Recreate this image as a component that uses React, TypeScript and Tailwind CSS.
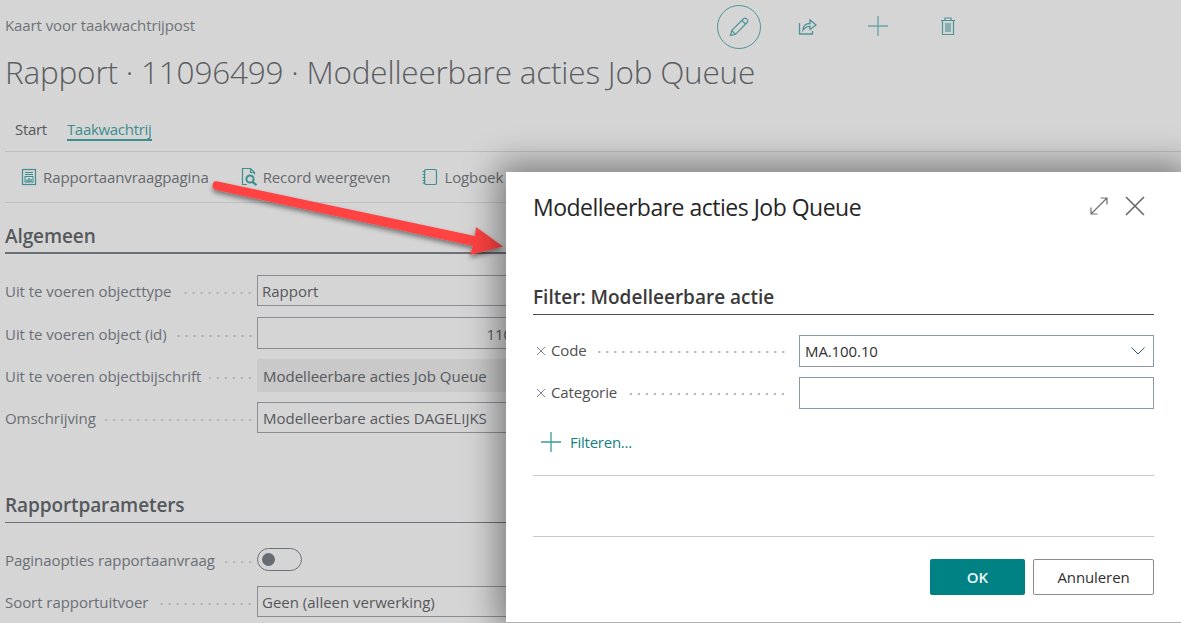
const font = { fontFamily: '"Open Sans", "Noto Sans", sans-serif' };

function Dots() {
  return (
    <span className="ml-[8px] mt-[3px] h-[2px] flex-1 bg-[radial-gradient(circle,#b2b2b2_1px,transparent_1.2px)] bg-[length:8px_2px] bg-right bg-repeat-x" />
  );
}

function PlusGlyph({ color, w = 1.4 }: { color: string; w?: number }) {
  return (
    <svg width="20" height="20" viewBox="0 0 20 20" fill="none" stroke={color} strokeWidth={w} className="shrink-0">
      <path d="M0 10h20M10 0v20" />
    </svg>
  );
}

function PageRow({ label, h, children }: { label: string; h: string; children: React.ReactNode }) {
  return (
    <div className={`flex items-center ${h}`}>
      <div className="flex w-[252px] shrink-0 items-center pr-[3px] pt-[2px] text-[15px] tracking-[-0.05px] text-[#6a6f75]">
        <span className="whitespace-nowrap">{label}</span>
        <Dots />
      </div>
      <div className="h-full w-[303px] shrink-0">{children}</div>
    </div>
  );
}

function Input({ children, right }: { children?: React.ReactNode; right?: boolean }) {
  return (
    <div
      className={`flex h-full items-center border border-[#8a8d92] px-[4px] pt-[2px] text-[15px] text-[#55585c] ${right ? 'justify-end' : ''}`}
    >
      {children}
    </div>
  );
}

function FilterRow({ label, children }: { label: string; children: React.ReactNode }) {
  return (
    <div className="flex h-[32px] items-center">
      <div className="flex w-[266px] shrink-0 items-center pb-[1px] pr-[12px] text-[15px] tracking-[-0.1px] text-[#505050]">
        <svg width="16" height="16" viewBox="0 0 16 16" fill="none" stroke="#7a6b8a" strokeWidth="0.9" className="mr-[2px] shrink-0">
          <path d="M4 4l8 8M12 4l-8 8" />
        </svg>
        <span className="whitespace-nowrap">{label}</span>
        <Dots />
      </div>
      <div className="flex h-full flex-1 items-center justify-between border border-[#8d97a8] px-[5px] text-[15px] tracking-[-0.1px] text-[#303030]">
        {children}
      </div>
    </div>
  );
}

function ActionIcon({ kind }: { kind: 'report' | 'search' | 'log' }) {
  return (
    <svg width="18" height="20" viewBox="0 0 18 20" fill="none" stroke="#3c8e90" strokeWidth="1.2" className="shrink-0">
      {kind === 'report' && (
        <>
          <rect x="2.5" y="2.5" width="13" height="15" />
          <path d="M5 5.5h8M5 7.5h8" />
          <rect x="5" y="9.5" width="8" height="5.5" strokeWidth="1" />
          <path d="M7 15v-2.5M9 15v-4M11 15v-3" strokeWidth="1.3" />
        </>
      )}
      {kind === 'search' && (
        <>
          <path d="M6 17.5H1.5V1.5h8l4 4v2M9.5 1.5v4h4" />
          <circle cx="9" cy="12" r="3.6" strokeWidth="2" />
          <path d="M11.5 14.8l4 3.4" strokeWidth="2.2" />
        </>
      )}
      {kind === 'log' && (
        <>
          <rect x="3.5" y="2.5" width="12" height="15" rx="1.5" />
          <path d="M1.5 4.5h3M1.5 7.5h3M1.5 10.5h3M1.5 13.5h3M1.5 16h3" strokeWidth="1" />
        </>
      )}
    </svg>
  );
}

function PageBehind() {
  return (
    <div className="pl-[5px]">
      {/* Header */}
      <div className="flex h-[51px] items-center">
        <div className="w-[712px] text-[15px] tracking-[-0.1px] text-[#6e7378]">Kaart voor taakwachtrijpost</div>
        <div className="mt-[2px] flex h-[44px] w-[44px] items-center justify-center rounded-full border border-[#4f9597]">
          <svg width="22" height="22" viewBox="0 0 22 22" fill="none" stroke="#4f9597" strokeWidth="1.2">
            <path d="M2.5 19.5l1.2-5L15.5 2.8a2 2 0 0 1 2.8 0l.9.9a2 2 0 0 1 0 2.8L7.5 18.3z" />
            <path d="M3.7 14.5l3.8 3.8M14 4.5l3.500 3.500" />
          </svg>
        </div>
        <div className="ml-[37px] flex w-[20px] justify-center">
          <svg width="20" height="20" viewBox="0 0 20 20" fill="none" stroke="#4f9597" strokeWidth="1.3">
            <path d="M1.5 7v11h13v-3" />
            <path d="M5 14c0-4 2.500-6.500 7-6.500V4l6 5-6 4.500v-3.200c-3 0-5 1-7 3.700z" />
          </svg>
        </div>
        <div className="ml-[50px]"><PlusGlyph color="#6aa5a7" /></div>
        <div className="ml-[50px] flex w-[20px] justify-center">
          <svg width="16" height="20" viewBox="0 0 16 20" fill="none" stroke="#4f9597" strokeWidth="1.2">
            <path d="M1 4.500h14M5 4.500V2h6v2.500M2.500 4.500V18.500h11V4.500M6 7v9M8 7v9M10 7v9" />
          </svg>
        </div>
      </div>

      {/* Title */}
      <div className="h-[45px] whitespace-nowrap text-[31.5px] font-light leading-[42px] tracking-[-0.2px] text-[#5a5d61]">
        Rapport · 11096499 · Modelleerbare acties Job Queue
      </div>

      {/* Tabs */}
      <div className="mt-[18px] flex h-[38px] items-start gap-[20px] border-b border-[#bdbdbd] pl-[10px] text-[15px] tracking-[-0.3px]">
        <span className="mt-[5px] leading-[20px] text-[#55585c]">Start</span>
        <span className="mt-[5px] border-b-2 border-[#3c8e90] leading-[20px] text-[#3c8e90]">Taakwachtrij</span>
      </div>

      {/* Actions */}
      <div className="flex h-[51px] items-center border-b border-[#c0c0c0] pl-[15px] text-[15px] tracking-[-0.1px] text-[#666a6e]">
        <ActionIcon kind="report" />
        <span className="ml-[5px]">Rapportaanvraagpagina</span>
        <span className="ml-[32px]"><ActionIcon kind="search" /></span>
        <span className="ml-[4px]">Record weergeven</span>
        <span className="ml-[31px]"><ActionIcon kind="log" /></span>
        <span className="ml-[5px]">Logboek</span>
      </div>

      {/* Algemeen */}
      <div className="mt-[18px] h-[33px] border-b-2 border-[#6c7078] text-[19px] font-semibold leading-[31px] tracking-[-0.1px] text-[#55585c]">
        Algemeen
      </div>
      <div className="mt-[21px] flex flex-col">
        <PageRow label="Uit te voeren objecttype" h="h-[31px]"><Input>Rapport</Input></PageRow>
        <div className="mt-[11px]">
          <PageRow label="Uit te voeren object (id)" h="h-[32px]"><Input right>11096499</Input></PageRow>
        </div>
        <div className="mt-[10px]">
          <PageRow label="Uit te voeren objectbijschrift" h="h-[33px]">
            <div className="flex h-full items-center bg-[#c9c9c9] px-[6px] pt-[2px] text-[15px] text-[#55585c]">
              Modelleerbare acties Job Queue
            </div>
          </PageRow>
        </div>
        <div className="mt-[10px]">
          <PageRow label="Omschrijving" h="h-[31px]">
            <Input><span className="pl-[1px]">Modelleerbare acties DAGELIJKS</span></Input>
          </PageRow>
        </div>
      </div>

      {/* Rapportparameters */}
      <div className="mt-[57px] h-[33px] border-b border-[#6c7078] text-[19px] font-semibold leading-[31px] tracking-[-0.1px] text-[#55585c]">
        Rapportparameters
      </div>
      <div className="mt-[25px] flex flex-col">
        <PageRow label="Paginaopties rapportaanvraag" h="h-[23px]">
          <div className="flex h-[23px] w-[45px] items-center rounded-full border border-[#6c7078] pl-[4px]">
            <span className="h-[13px] w-[13px] rounded-full bg-[#676b73]" />
          </div>
        </PageRow>
        <div className="mt-[15px]">
          <PageRow label="Soort rapportuitvoer" h="h-[31px]"><Input>Geen (alleen verwerking)</Input></PageRow>
        </div>
      </div>
    </div>
  );
}

function Dialog() {
  return (
    <div className="absolute left-[506px] top-[172px] flex h-[450px] w-[675px] flex-col bg-white px-[27px] shadow-[0_0_32px_8px_rgba(0,0,0,0.42)]">
      <div className="flex h-[70px] items-center justify-between">
        <div className="text-[23px] font-medium tracking-[-0.5px] text-[#262626]">Modelleerbare acties Job Queue</div>
        <div className="flex items-center gap-[17px] pb-[2px] pr-[9px]">
          <svg width="18" height="18" viewBox="0 0 18 18" fill="none" stroke="#707070" strokeWidth="1.2">
            <path d="M1 17L17 1M10.500 1H17v6.500M1 10.500V17h6.500" />
          </svg>
          <svg width="20" height="20" viewBox="0 0 20 20" fill="none" stroke="#686868" strokeWidth="1.6">
            <path d="M1 1l18 18M19 1L1 19" />
          </svg>
        </div>
      </div>

      <div className="mt-[43px] h-[30px] border-b border-[#4b4f55] text-[19px] font-semibold leading-[24px] text-[#3a3a3a]">
        Filter: Modelleerbare actie
      </div>

      <div className="mt-[20px] flex flex-col gap-[10px]">
        <FilterRow label="Code">
          <span>MA.100.10</span>
          <svg width="16" height="10" viewBox="0 0 16 10" fill="none" stroke="#2f5a80" strokeWidth="1" className="mr-[2px]">
            <path d="M1.500 1.500L8 8l6.500-6.500" />
          </svg>
        </FilterRow>
        <FilterRow label="Categorie">{null}</FilterRow>
      </div>

      <div className="mt-[23px] flex h-[20px] items-center pl-[8px] text-[15px] tracking-[-0.25px] text-[#157f83]">
        <PlusGlyph color="#3d9a9c" w={1.3} />
        <span className="ml-[9px]">Filteren...</span>
      </div>

      <div className="mt-[23px] border-b border-[#c8c8c8]" />
      <div className="mt-[60px] border-b border-[#c8c8c8]" />

      <div className="mt-[22px] flex justify-end gap-[8px]">
        <button className="h-[36px] w-[95px] rounded-[2px] bg-[#008183] text-[15px] font-semibold text-[#f0f8f8]">OK</button>
        <button className="h-[36px] w-[121px] rounded-[2px] border border-[#8a8a8a] bg-white text-[15px] tracking-[-0.1px] text-[#303030]">Annuleren</button>
      </div>

      <div className="absolute bottom-[-1px] left-0 right-0 border-b border-[#b0b0b0]" />
    </div>
  );
}

function Arrow() {
  return (
    <svg className="pointer-events-none absolute left-0 top-0" width="520" height="270" viewBox="0 0 520 270">
      <defs>
        <filter id="arrowShadow" x="-10%" y="-30%" width="120%" height="170%">
          <feDropShadow dx="0" dy="3" stdDeviation="2.500" floodColor="#000" floodOpacity="0.45" />
        </filter>
      </defs>
      <path
        d="M214 181.500 Q211 186 214 189.500 L473 246 L470 255 L503 246.500 L476 227 L475 236 L218 181.500 Q216 181 214 181.500 Z"
        fill="#ff4343"
        filter="url(#arrowShadow)"
      />
    </svg>
  );
}

export default function App() {
  return (
    <div className="relative h-[623px] w-[1181px] overflow-hidden bg-[#d5d5d5]" style={font}>
      <PageBehind />
      <Arrow />
      <Dialog />
    </div>
  );
}
